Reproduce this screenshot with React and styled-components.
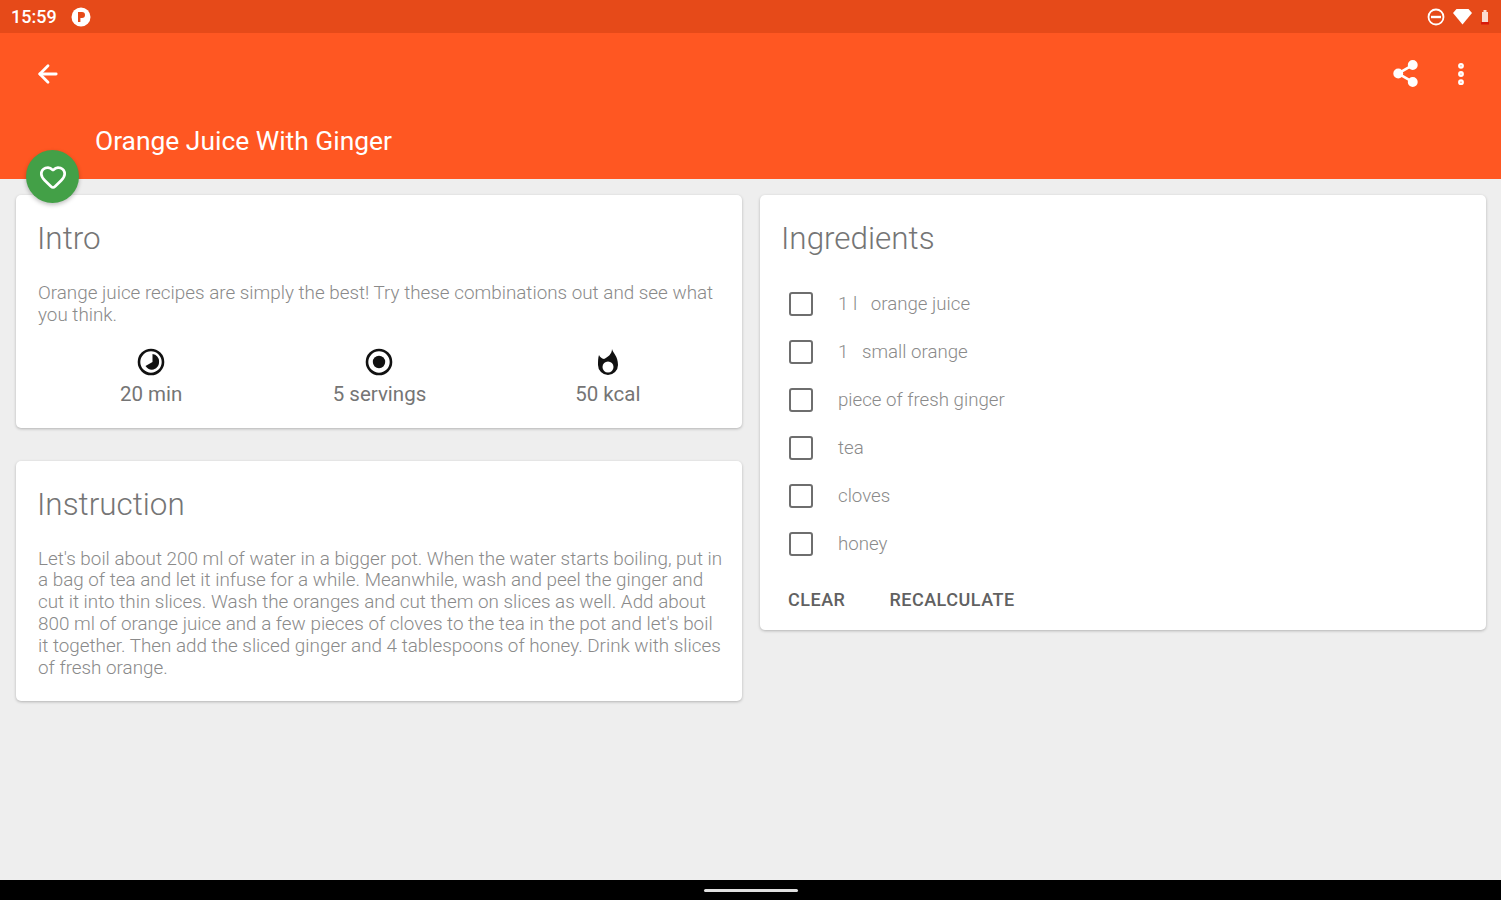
import React from 'react'
import styled, { createGlobalStyle } from 'styled-components'
import { ArrowLeft, Share2, MoreVertical, Heart } from 'lucide-react'

const Global = createGlobalStyle`
  html, body { margin: 0; padding: 0; height: 100%; }
  body { font-family: Roboto, "Liberation Sans", sans-serif; background: #eeeeee; overflow: hidden; }
`

const ingredients = ['1 l\u00a0\u00a0 orange juice', '1\u00a0\u00a0 small orange', 'piece of fresh ginger', 'tea', 'cloves', 'honey']

const App = () => {
  return (
    <Screen>
      <Global />
      <StatusBar>
        <StatusLeft>
          <Clock>15:59</Clock>
          <svg width="20" height="20" viewBox="0 0 20 20">
            <circle cx="10" cy="10" r="9.500" fill="#fff" />
            <path d="M7 15V5h4a3 3 0 0 1 0 6H9.400v4z" fill="#e64a19" />
          </svg>
        </StatusLeft>
        <StatusRight>
          <svg width="18" height="18" viewBox="0 0 18 18">
            <circle cx="9" cy="9" r="7.500" fill="none" stroke="#fff" strokeWidth="1.800" />
            <rect x="4" y="7.800" width="10" height="2.400" fill="#fff" />
          </svg>
          <svg width="21" height="17" viewBox="0 0 21 17">
            <path d="M1 5 4.500 1h12L20 5l-9.500 11.500z" fill="#fff" />
          </svg>
          <svg width="10" height="18" viewBox="0 0 10 18">
            <path d="M3.500 2h3v2H8v10H2V4h1.500z" fill="#fff" opacity="0.8" />
            <rect x="1" y="14" width="8" height="2.500" fill="#d81b0c" />
          </svg>
        </StatusRight>
      </StatusBar>

      <AppBar>
        <ActionRow>
          <ArrowLeft size={28} color="#fff" strokeWidth={2.4} />
          <Actions>
            <Share2 size={29} color="#fff" fill="#fff" strokeWidth={2.2} />
            <MoreVertical size={28} color="#fff" strokeWidth={3} />
          </Actions>
        </ActionRow>
        <Title>Orange Juice With Ginger</Title>
        <Fab>
          <Heart size={28} color="#fff" strokeWidth={2.3} />
        </Fab>
      </AppBar>

      <Content>
        <Column>
          <Card>
            <CardTitle>Intro</CardTitle>
            <BodyText>
              Orange juice recipes are simply the best! Try these combinations out and see what you think.
            </BodyText>
            <Stats>
              <Stat>
                <svg width="30" height="30" viewBox="0 0 30 30">
                  <circle cx="15" cy="15" r="12" fill="none" stroke="#111" strokeWidth="2.600" />
                  <path d="M16.500 7a8 8 0 0 1 1 15.500 8 8 0 0 1-8-3.500l7-4z" fill="#111" />
                </svg>
                <StatLabel>20 min</StatLabel>
              </Stat>
              <Stat>
                <svg width="30" height="30" viewBox="0 0 30 30">
                  <circle cx="15" cy="15" r="12" fill="none" stroke="#111" strokeWidth="2.600" />
                  <circle cx="15" cy="15" r="6.200" fill="#111" />
                </svg>
                <StatLabel>5 servings</StatLabel>
              </Stat>
              <Stat>
                <svg width="30" height="30" viewBox="0 0 30 30">
                  <path d="M19 2c1 4 6 7 6 16a10 10 0 0 1-20 0c0-4 0-7 1-10 1 2 2.500 3.500 5 4 4-2 8-5 8-10z" fill="#111" />
                  <circle cx="15" cy="20" r="5.500" fill="#fff" />
                </svg>
                <StatLabel>50 kcal</StatLabel>
              </Stat>
            </Stats>
          </Card>
          <Card>
            <CardTitle>Instruction</CardTitle>
            <BodyText>
              Let's boil about 200 ml of water in a bigger pot. When the water starts boiling, put in a bag of tea and let it infuse for a while. Meanwhile, wash and peel the ginger and cut it into thin slices. Wash the oranges and cut them on slices as well. Add about 800 ml of orange juice and a few pieces of cloves to the tea in the pot and let's boil it together. Then add the sliced ginger and 4 tablespoons of honey. Drink with slices of fresh orange.
            </BodyText>
          </Card>
        </Column>
        <Column>
          <Card $bottom={15}>
            <CardTitle>Ingredients</CardTitle>
            <IngredientList>
              {ingredients.map((item) => (
                <Ingredient key={item}>
                  <CheckBox />
                  <IngredientText>{item}</IngredientText>
                </Ingredient>
              ))}
            </IngredientList>
            <Buttons>
              <TextButton>CLEAR</TextButton>
              <TextButton>RECALCULATE</TextButton>
            </Buttons>
          </Card>
        </Column>
      </Content>

      <NavBar>
        <NavPill />
      </NavBar>
    </Screen>
  )
}

const Screen = styled.div`
  width: 1501px;
  height: 900px;
  display: flex;
  flex-direction: column;
  background: #eeeeee;
`

const StatusBar = styled.div`
  height: 33px;
  background: #e64a19;
  display: flex;
  align-items: center;
  justify-content: space-between;
  padding: 0 11px 0 11px;
`

const StatusLeft = styled.div`
  display: flex;
  align-items: center;
  gap: 14px;
`

const StatusRight = styled.div`
  display: flex;
  align-items: center;
  gap: 7px;
`

const Clock = styled.span`
  color: #fff;
  font-size: 18px;
  font-weight: 500;
`

const AppBar = styled.header`
  position: relative;
  height: 146px;
  background: #ff5722;
  box-sizing: border-box;
  padding: 26px 26px 0 34px;
`

const ActionRow = styled.div`
  display: flex;
  align-items: center;
  justify-content: space-between;
`

const Actions = styled.div`
  display: flex;
  align-items: center;
  gap: 27px;
`

const Title = styled.h1`
  margin: 37px 0 0 61px;
  color: #fff;
  font-size: 26.400px;
  line-height: 32px;
  font-weight: 400;
`

const Fab = styled.div`
  position: absolute;
  left: 26px;
  top: 117px;
  width: 53px;
  height: 53px;
  border-radius: 50%;
  background: #43a047;
  display: flex;
  align-items: center;
  justify-content: center;
  box-shadow: 0 2px 4px rgba(0, 0, 0, 0.25);
`

const Content = styled.main`
  flex: 1;
  display: grid;
  grid-template-columns: 726px 726px;
  gap: 18px;
  padding: 16px 15px 0 16px;
  align-items: start;
`

const Column = styled.div`
  display: flex;
  flex-direction: column;
  gap: 33px;
`

const Card = styled.section`
  background: #fff;
  border-radius: 5px;
  box-shadow: 0 1px 3px rgba(0, 0, 0, 0.25);
  box-sizing: border-box;
  padding: 24px 17px ${(p) => p.$bottom ?? 22}px 22px;
`

const CardTitle = styled.h2`
  margin: 0 0 0 -1px;
  color: #757575;
  font-size: 31.400px;
  line-height: 40px;
  font-weight: 300;
`

const BodyText = styled.p`
  margin: 24px 0 0;
  color: #8a8a8a;
  font-size: 18.850px;
  line-height: 21.800px;
  font-weight: 300;
`

const Stats = styled.div`
  display: grid;
  grid-template-columns: repeat(3, 1fr);
  margin: 20px 3px 0 -1px;
`

const Stat = styled.div`
  display: flex;
  flex-direction: column;
  align-items: center;
`

const StatLabel = styled.span`
  color: #757575;
  font-size: 20.500px;
  line-height: 24px;
  margin-top: 5px;
`

const IngredientList = styled.div`
  display: flex;
  flex-direction: column;
  margin-top: 21px;
`

const Ingredient = styled.div`
  height: 48px;
  display: flex;
  align-items: center;
  padding-left: 7px;
`

const CheckBox = styled.span`
  width: 20px;
  height: 20px;
  border: 2.500px solid #6e6e6e;
  border-radius: 3px;
  margin-right: 25px;
`

const IngredientText = styled.span`
  color: #8a8a8a;
  font-size: 18.700px;
  font-weight: 300;
`

const Buttons = styled.div`
  display: flex;
  gap: 44px;
  padding-left: 6px;
  margin-top: 15px;
  height: 32px;
  align-items: center;
`

const TextButton = styled.span`
  color: #616161;
  font-size: 18px;
  font-weight: 500;
  letter-spacing: 0.5px;
`

const NavBar = styled.div`
  height: 20px;
  background: #000;
  display: flex;
  justify-content: center;
  padding-top: 9px;
  box-sizing: border-box;
`

const NavPill = styled.div`
  width: 94px;
  height: 3px;
  background: #e0e0e0;
  border-radius: 2px;
`

export default App
